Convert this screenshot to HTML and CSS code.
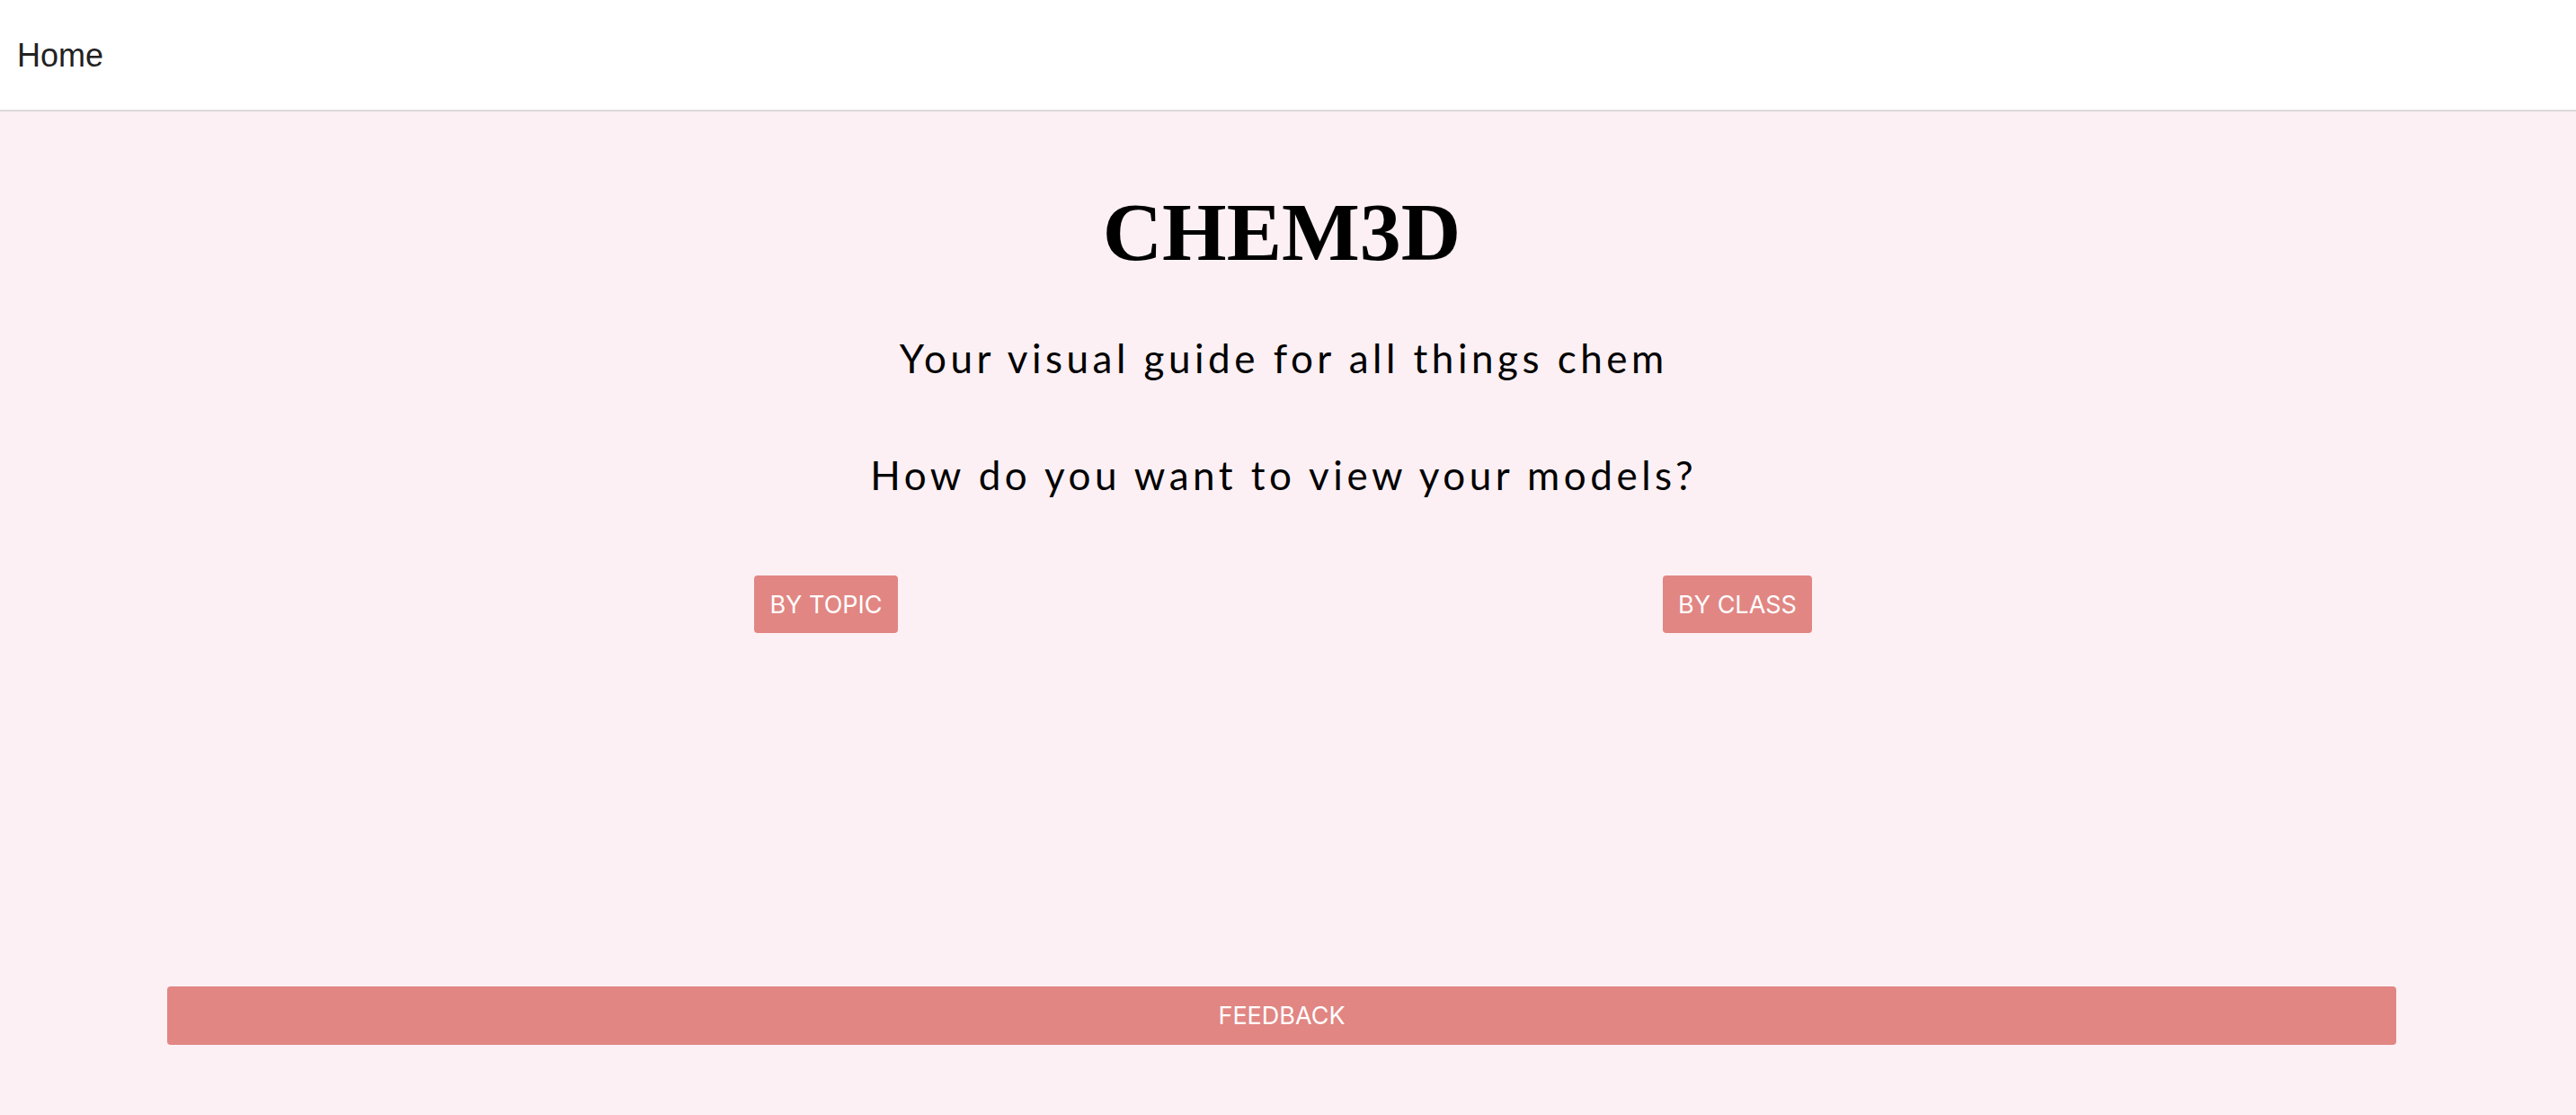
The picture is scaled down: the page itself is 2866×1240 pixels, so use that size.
FILE: index.html
```html
<!DOCTYPE html>
<html lang="en">
<head>
<meta charset="utf-8">
<title>Chem3D</title>
<link rel="stylesheet" href="styles.css">
</head>
<body>
<header class="topbar">
  <a class="home-link" href="#">Home</a>
</header>
<main class="main">
  <h1 class="title">CHEM3D</h1>
  <p class="subtitle">Your visual guide for all things chem</p>
  <p class="question">How do you want to view your models?</p>
  <div class="choices">
    <div class="choice"><button class="btn">BY TOPIC</button></div>
    <div class="choice"><button class="btn">BY CLASS</button></div>
  </div>
  <div class="feedback-row">
    <button class="btn btn-wide">FEEDBACK</button>
  </div>
</main>
</body>
</html>
```
FILE: styles.css
```css
html, body {
  margin: 0;
  padding: 0;
}
body {
  background: #fcf0f4;
  width: 2866px;
  height: 1240px;
  overflow: hidden;
}
.topbar {
  background: #ffffff;
  height: 122px;
  border-bottom: 2px solid #dadada;
  display: flex;
  align-items: center;
  padding-left: 19px;
  box-sizing: content-box;
}
.home-link {
  font-family: "Liberation Sans", Arial, sans-serif;
  font-size: 36px;
  color: #222222;
  text-decoration: none;
  margin-top: 2px;
}
.main {
  width: 2852px;
  display: flex;
  flex-direction: column;
  align-items: center;
  padding-top: 88px;
}
.title {
  margin: 0;
  font-family: "Liberation Serif", "Times New Roman", serif;
  font-weight: 700;
  font-size: 92px;
  line-height: 92px;
  letter-spacing: 0;
  color: #000;
}
.subtitle, .question {
  margin: 0;
  font-family: "Lato", sans-serif;
  font-weight: 400;
  font-size: 44px;
  line-height: 44px;
  letter-spacing: 4.5px;
  margin-right: -4.5px;
  color: #000;
}
.subtitle {
  margin-top: 72px;
}
.question {
  margin-top: 86px;
}
.choices {
  margin-top: 90px;
  width: 2028px;
  display: grid;
  grid-template-columns: 1fr 1fr;
}
.choice {
  display: flex;
  justify-content: center;
}
.btn {
  background: #e18683;
  color: #ffffff;
  border: none;
  border-radius: 4px;
  height: 64px;
  padding: 0 17px;
  font-family: "Inter", "Roboto", sans-serif;
  font-size: 27px;
  font-weight: 400;
  cursor: pointer;
}
.feedback-row {
  margin-top: 393px;
  width: 2480px;
  display: flex;
}
.btn-wide {
  flex: 1;
  height: 65px;
}
```
